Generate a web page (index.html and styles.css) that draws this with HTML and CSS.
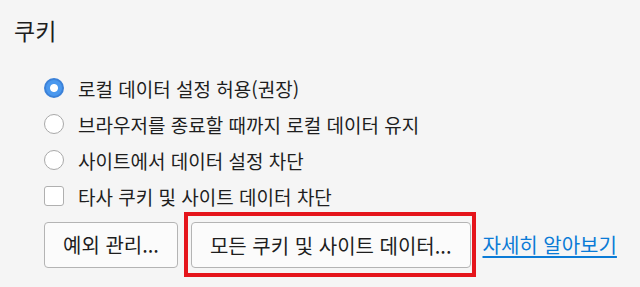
FILE: index.html
```html
<!doctype html>
<html lang="ko">
    <head>
        <meta charset="UTF-8" />
        <meta name="viewport" content="width=device-width, initial-scale=1.0" />
        <title>쿠키</title>
        <link rel="stylesheet" href="styles.css">
    </head>
    <body>
        <section class="cookies">
            <h2 class="section-title">쿠키</h2>

            <div class="options">
                <label class="option">
                    <span class="radio checked"></span>
                    <span>로컬 데이터 설정 허용(권장)</span>
                </label>
                <label class="option">
                    <span class="radio"></span>
                    <span>브라우저를 종료할 때까지 로컬 데이터 유지</span>
                </label>
                <label class="option">
                    <span class="radio"></span>
                    <span>사이트에서 데이터 설정 차단</span>
                </label>
                <label class="option">
                    <span class="checkbox"></span>
                    <span>타사 쿠키 및 사이트 데이터 차단</span>
                </label>
            </div>

            <div class="actions">
                <button class="button">예외 관리...</button>
                <span class="highlight">
                    <button class="button">모든 쿠키 및 사이트 데이터...</button>
                </span>
                <a class="learn-more" href="#">자세히 알아보기</a>
            </div>
        </section>
    </body>
</html>
```

FILE: styles.css
```css
* {
    margin: 0;
    padding: 0;
    box-sizing: border-box;
    font-family: "Noto Sans CJK KR", "Noto Sans", sans-serif;
}

body {
    background: #f5f5f5;
    color: #1e1e1e;
    width: 640px;
    height: 287px;
    overflow: hidden;
}

.cookies {
    padding: 15px 0 0 14px;
}

.section-title {
    font-size: 23px;
    font-weight: 400;
    line-height: 30px;
    margin-bottom: 25px;
}

.options {
    padding-left: 30px;
}

.option {
    display: flex;
    align-items: center;
    gap: 14px;
    height: 36px;
    font-size: 19px;
}

.radio {
    width: 20px;
    height: 20px;
    border-radius: 50%;
    border: 1.5px solid #a9a9a9;
    background: #fff;
    flex-shrink: 0;
}

.radio.checked {
    border: 2px solid #3b81d8;
    background: radial-gradient(circle, #fff 0 3.5px, #4a98ee 4.5px);
}

.checkbox {
    width: 20px;
    height: 20px;
    border-radius: 3px;
    border: 1.5px solid #b0b0b0;
    background: #fff;
    flex-shrink: 0;
}

.actions {
    display: flex;
    align-items: center;
    margin-top: -2px;
    padding-left: 30px;
}

.button {
    height: 46px;
    padding: 0 18px;
    font-size: 20px;
    color: #1e1e1e;
    background: #fbfbfb;
    border: 1px solid #b4b4b4;
    border-radius: 4px;
}

.highlight {
    display: flex;
    margin-left: 6px;
    padding: 6px 1px 5px 3px;
    border: 4px solid #e5151b;
}

.learn-more {
    margin-left: 7px;
    font-size: 20px;
    color: #0b7bd6;
    text-decoration: underline;
    text-underline-offset: 3px;
}
```
